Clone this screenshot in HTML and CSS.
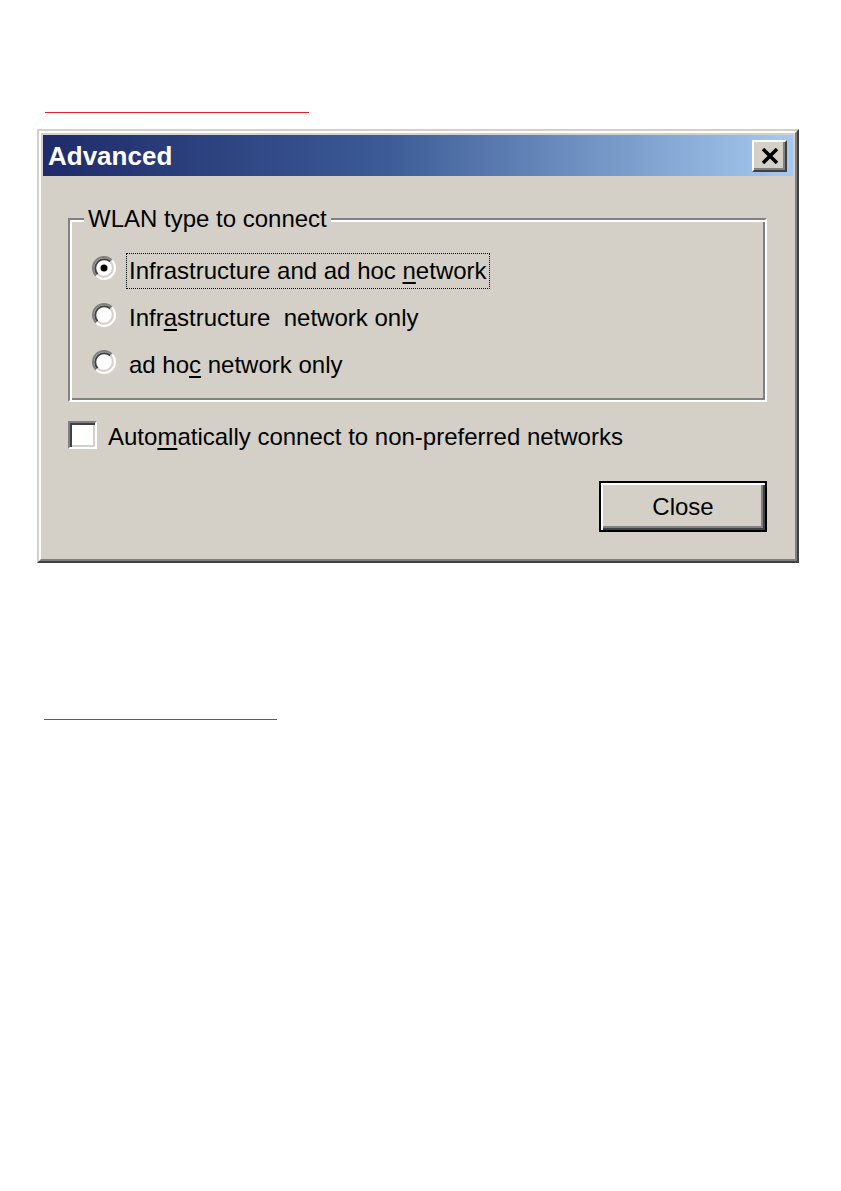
FILE: index.html
```html
<!DOCTYPE html>
<html>
<head>
<meta charset="utf-8">
<link rel="stylesheet" href="styles.css">
</head>
<body>
<div class="page">
  <div class="rule rule-top"></div>
  <div class="dialog">
    <div class="frame">
      <div class="titlebar">
        <span class="title">Advanced</span>
        <div class="xbtn">
          <svg width="18" height="16" viewBox="0 0 18 16"><path d="M2 1 L16 15 M16 1 L2 15" stroke="#000" stroke-width="3.5" fill="none"/></svg>
        </div>
      </div>
      <div class="client">
        <fieldset class="group">
          <legend>WLAN type to connect</legend>
          <div class="options">
            <div class="opt">
              <svg class="radio" viewBox="0 0 24 24"><circle cx="12" cy="12" r="10" fill="#fff"/><path d="M4.22 19.78 A11 11 0 0 1 19.78 4.22" stroke="#808080" stroke-width="2" fill="none"/><path d="M19.78 4.22 A11 11 0 0 1 4.22 19.78" stroke="#fff" stroke-width="2" fill="none"/><path d="M5.64 18.36 A9 9 0 0 1 18.36 5.64" stroke="#404040" stroke-width="2" fill="none"/><path d="M18.36 5.64 A9 9 0 0 1 5.64 18.36" stroke="#d4d0c8" stroke-width="2" fill="none"/><circle cx="12" cy="12" r="3.5" fill="#000"/></svg>
              <span class="lbl focus">Infrastructure and ad hoc <u>n</u>etwork</span>
            </div>
            <div class="opt">
              <svg class="radio" viewBox="0 0 24 24"><circle cx="12" cy="12" r="10" fill="#fff"/><path d="M4.22 19.78 A11 11 0 0 1 19.78 4.22" stroke="#808080" stroke-width="2" fill="none"/><path d="M19.78 4.22 A11 11 0 0 1 4.22 19.78" stroke="#fff" stroke-width="2" fill="none"/><path d="M5.64 18.36 A9 9 0 0 1 18.36 5.64" stroke="#404040" stroke-width="2" fill="none"/><path d="M18.36 5.64 A9 9 0 0 1 5.64 18.36" stroke="#d4d0c8" stroke-width="2" fill="none"/></svg>
              <span class="lbl">Infr<u>a</u>structure&nbsp; network only</span>
            </div>
            <div class="opt">
              <svg class="radio" viewBox="0 0 24 24"><circle cx="12" cy="12" r="10" fill="#fff"/><path d="M4.22 19.78 A11 11 0 0 1 19.78 4.22" stroke="#808080" stroke-width="2" fill="none"/><path d="M19.78 4.22 A11 11 0 0 1 4.22 19.78" stroke="#fff" stroke-width="2" fill="none"/><path d="M5.64 18.36 A9 9 0 0 1 18.36 5.64" stroke="#404040" stroke-width="2" fill="none"/><path d="M18.36 5.64 A9 9 0 0 1 5.64 18.36" stroke="#d4d0c8" stroke-width="2" fill="none"/></svg>
              <span class="lbl">ad ho<u>c</u> network only</span>
            </div>
          </div>
        </fieldset>
        <div class="check">
          <span class="box"></span>
          <span class="check-text">Auto<u>m</u>atically connect to non-preferred networks</span>
        </div>
        <div class="actions">
          <button class="btn">Close</button>
        </div>
      </div>
    </div>
  </div>
  <div class="rule rule-bottom"></div>
</div>
</body>
</html>
```
FILE: styles.css
```css
body {
  margin: 0;
  background: #fff;
  font-family: "Liberation Sans", Arial, sans-serif;
  color: #000;
}
.page {
  padding-top: 112px;
}
.rule {
  height: 1px;
  background: #e4222a;
}
.rule-top {
  margin-left: 45px;
  width: 264px;
}
.rule-bottom {
  margin-top: 156px;
  margin-left: 44px;
  width: 233px;
}
.dialog {
  margin: 16px 0 0 37px;
  width: 762px;
  box-sizing: border-box;
  border: 2px solid;
  border-color: #d4d0c8 #404040 #404040 #d4d0c8;
}
.frame {
  border: 2px solid;
  border-color: #fff #808080 #808080 #fff;
  padding: 2px;
  background: #d4d0c8;
}
.titlebar {
  height: 41px;
  display: flex;
  align-items: center;
  justify-content: space-between;
  padding: 0 6px 0 5px;
  background: linear-gradient(90deg, #1f2b6a 0%, #3b5a96 45%, #a6caef 100%);
}
.title {
  color: #fff;
  font-weight: bold;
  font-size: 26px;
  line-height: 30px;
}
.xbtn {
  width: 35px;
  height: 32px;
  box-sizing: border-box;
  border: 2px solid;
  border-color: #fff #404040 #404040 #fff;
  box-shadow: inset -2px -2px 0 #808080;
  background: #d4d0c8;
  display: flex;
  align-items: center;
  justify-content: center;
}
.client {
  padding: 29px 26px 25px 25px;
}
.group {
  margin: 0;
  padding: 0;
  min-width: 0;
  border: 2px solid;
  border-color: #808080 #fff #fff #808080;
  box-shadow: inset 2px 2px 0 #fff, inset -2px -2px 0 #808080;
}
.group legend {
  margin-left: 14px;
  padding: 0 4px;
  font-size: 24px;
  line-height: 28px;
  background: #d4d0c8;
}
.options {
  display: flex;
  flex-direction: column;
  gap: 11px;
  padding: 20px 0 17px 22px;
}
.opt {
  display: flex;
  align-items: flex-start;
}
.radio {
  width: 24px;
  height: 24px;
  margin-top: 3px;
  flex: none;
}
.lbl {
  margin-left: 10px;
  padding: 3px 2px;
  border: 1px dotted transparent;
  font-size: 24px;
  line-height: 28px;
}
.lbl.focus {
  border-color: #000;
}
u {
  text-decoration-thickness: 2px;
  text-underline-offset: 3px;
}
.check {
  display: flex;
  align-items: flex-start;
  margin-top: 19px;
}
.box {
  width: 29px;
  height: 28px;
  box-sizing: border-box;
  flex: none;
  border: 2px solid;
  border-color: #808080 #fff #fff #808080;
  box-shadow: inset 2px 2px 0 #404040, inset -2px -2px 0 #d4d0c8;
  background: #fff;
}
.check-text {
  margin-left: 11px;
  padding-top: 2px;
  font-size: 24px;
  line-height: 28px;
}
.actions {
  display: flex;
  justify-content: flex-end;
  margin-top: 30px;
}
.btn {
  width: 168px;
  height: 51px;
  padding: 0;
  border: 2px solid #000;
  background: #d4d0c8;
  box-shadow: inset 2px 2px 0 #fff, inset -2px -2px 0 #404040, inset -4px -4px 0 #808080;
  font-family: "Liberation Sans", Arial, sans-serif;
  font-size: 24px;
  color: #000;
}
```
